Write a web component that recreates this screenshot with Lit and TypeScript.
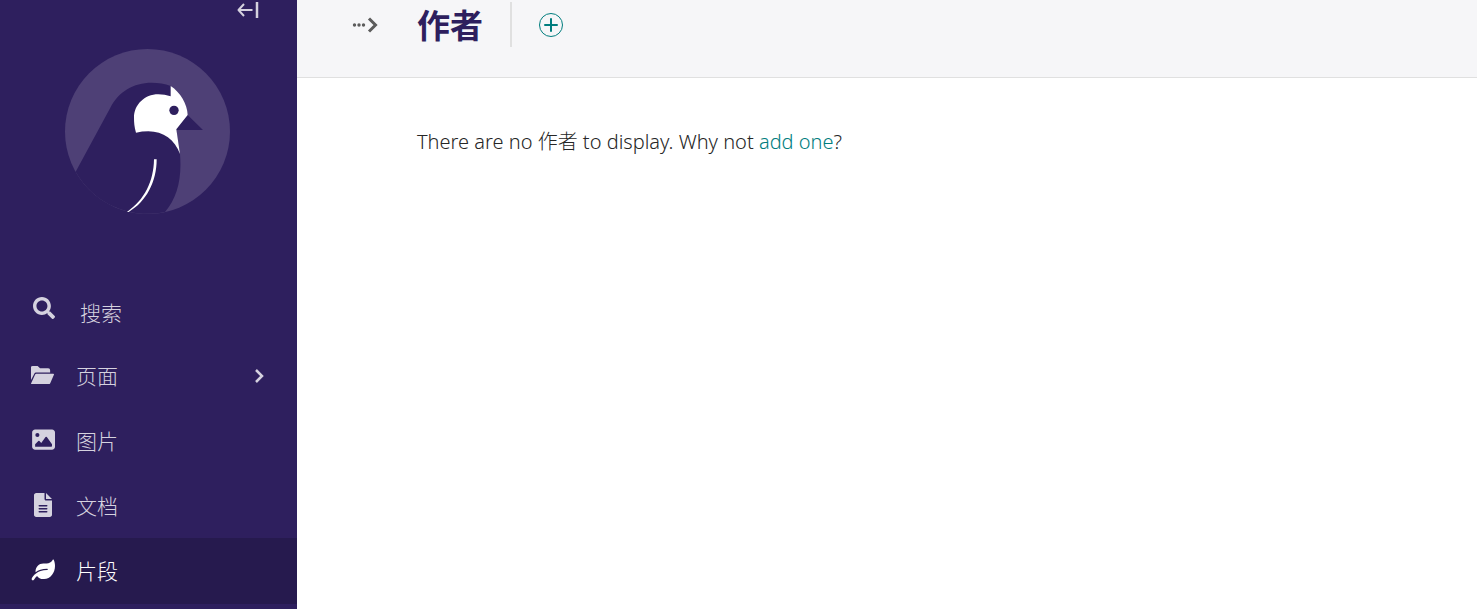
import { LitElement, html, css, svg } from "lit";
import { customElement } from "lit/decorators.js";
import { classMap } from "lit/directives/class-map.js";

const icons = {
  search: { box: "0 0 512 512", d: "M505 442.7L405.3 343c-4.5-4.5-10.6-7-17-7H372c27.6-35.3 44-79.7 44-128C416 93.1 322.9 0 208 0S0 93.1 0 208s93.1 208 208 208c48.3 0 92.7-16.4 128-44v16.3c0 6.4 2.5 12.5 7 17l99.7 99.7c9.4 9.4 24.6 9.4 33.9 0l28.3-28.3c9.4-9.4 9.4-24.6.1-34zM208 336c-70.7 0-128-57.2-128-128 0-70.7 57.2-128 128-128 70.7 0 128 57.2 128 128 0 70.7-57.2 128-128 128z" },
  folder: { box: "8 0 592 512", d: "M50 32H172L232 92H432Q480 92 480 140V192H126Q108 192 100 208L0 396V82Q0 32 50 32ZM138 224H560Q584 224 573 248L482 458Q472 480 448 480H22Q2 480 12 460L110 242Q118 224 138 224Z" },
  image: { box: "-24 0 512 512", d: "M0 96C0 60.7 28.7 32 64 32H424c35.3 0 64 28.7 64 64V400c0 35.3-28.700 64-64 64H64c-35.300 0-64-28.700-64-64V96zM64 384V348L132 276Q144 266 156 276L194 318L286 192Q300 176 314 192L424 344V384Q424 400 408 400H64ZM112 192a44 44 0 1 0 0-88 44 44 0 1 0 0 88z" },
  doc: { box: "-64 0 512 512", d: "M48 0C21.500 0 0 21.500 0 48V464c0 26.500 21.500 48 48 48H336c26.500 0 48-21.500 48-48V160H256c-17.700 0-32-14.300-32-32V0zM256 0V128H384zM112 256H272c21 0 21 32 0 32H112c-21 0-21-32 0-32zm0 64H272c21 0 21 32 0 32H112c-21 0-21-32 0-32zm0 64H272c21 0 21 32 0 32H112c-21 0-21-32 0-32z" },
  leaf: { box: "-16 0 592 512", d: "M546.2 9.7c-5.6-12.5-21.6-13-28.3-1.2C486.9 62.4 431.4 96 368 96h-80C182 96 96 182 96 288c0 7 .8 13.700 1.500 20.500C161.300 262.800 253.400 224 384 224c8.800 0 16 7.200 16 16s-7.200 16-16 16C132.600 256 26 410.100 2.400 468c-6.600 16.300 1.200 34.900 17.500 41.600 16.400 6.800 35-1.100 41.800-17.300 1.500-3.600 20.900-47.900 71.900-90.600 32.400 43.900 94 85.800 174.900 77.200C465.500 467.500 576 326.700 576 154.300c0-50.200-10.800-102.200-29.800-144.600z" },
};

type IconName = keyof typeof icons;

const icon = (name: IconName) => html`
  <svg class="icon" viewBox=${icons[name].box} aria-hidden="true">
    ${svg`<path fill="currentColor" fill-rule="evenodd" d=${icons[name].d}></path>`}
  </svg>`;

interface MenuEntry {
  label: string;
  icon: IconName;
  expandable?: boolean;
  active?: boolean;
}

const entries: MenuEntry[] = [
  { label: "页面", icon: "folder", expandable: true },
  { label: "图片", icon: "image" },
  { label: "文档", icon: "doc" },
  { label: "片段", icon: "leaf", active: true },
];

@customElement("side-bar")
export class SideBar extends LitElement {
  static styles = css`
    :host {
      display: flex;
      flex-direction: column;
      background: #2e1f5e;
      color: #d5d2df;
      font-weight: 300;
    }
    button, a {
      font: inherit;
      color: inherit;
      text-decoration: none;
      border: 0;
      background: none;
      cursor: pointer;
    }
    .top {
      display: flex;
      justify-content: flex-end;
      padding-right: 37px;
    }
    .collapse {
      display: flex;
      padding: 1px;
      height: 20px;
    }
    .logo {
      display: flex;
      justify-content: center;
      padding: 29px 2px 69px 0;
    }
    .logo svg {
      display: block;
    }
    .search, .item {
      display: flex;
      align-items: center;
      box-sizing: border-box;
      width: 100%;
      height: 65px;
      padding: 0 32px 0 31px;
      gap: 21px;
      font-size: 21px;
      line-height: 32px;
      text-align: left;
    }
    .search {
      height: 60px;
      padding-left: 32px;
      gap: 24px;
    }
    .search .icon {
      margin-bottom: 10px;
    }
    .menu {
      list-style: none;
      margin: 0;
      padding: 0;
    }
    .label {
      flex: 1;
    }
    .icon {
      width: 24px;
      height: 22px;
      flex: none;
    }
    .item .icon {
      height: 24px;
      margin-bottom: 2px;
    }
    .item.active {
      height: 66px;
      background: #261a4e;
      color: #fff;
    }
  `;

  render() {
    return html`
      <div class="top">
        <button class="collapse" aria-label="Collapse sidebar">
          <svg width="22" height="18" viewBox="0 0 22 18" fill="none" stroke="currentColor" stroke-width="2">
            <path d="M15.500 9H2M7 3L1.500 9L7 15" stroke-linejoin="round"></path>
            <path d="M20 1V17" stroke-width="2.500"></path>
          </svg>
        </button>
      </div>
      <a class="logo" href="#" aria-label="Dashboard">
        <svg width="165" height="165" viewBox="45 42 495 495">
          <circle cx="292.500" cy="289.500" r="247.500" fill="#4e4076"></circle>
          <path fill="#2e1f5e" d="M77 410L181 218C206 170 250 143 305 143C325 143 345 146 362 153L413 240L459 285H379L390 357C396 430 382 489 345 531A247.500 247.500 0 0 1 77 410Z"></path>
          <path fill="#fff" d="M362 153C391 172 412 207 413 240L379 283L390 357C375 315 340 289 295 289Q276 289 258 293C253 275 252 262 252 248C252 210 283 178 325 178Q344 178 362 184Z"></path>
          <path fill="#fff" d="M312 373H320C320 440 289 500 236 531H231C283 495 311 440 312 373Z"></path>
          <circle cx="372" cy="226" r="14" fill="#2e1f5e"></circle>
        </svg>
      </a>
      <button class="search">${icon("search")}<span class="label">搜索</span></button>
      <nav>
        <ul class="menu">
          ${entries.map((e) => html`
            <li>
              <a href="#" class=${classMap({ item: true, active: !!e.active })}>
                ${icon(e.icon)}<span class="label">${e.label}</span>
                ${e.expandable
                  ? html`<svg width="12" height="16" viewBox="0 0 12 16" fill="none" stroke="currentColor" stroke-width="2.500">
                      <path d="M3 2L9 8L3 14"></path>
                    </svg>`
                  : ""}
              </a>
            </li>`)}
        </ul>
      </nav>
    `;
  }
}

@customElement("app-root")
export class AppRoot extends LitElement {
  static styles = css`
    :host {
      display: grid;
      grid-template-columns: 297px 1fr;
      height: 100vh;
      overflow: hidden;
      background: #fff;
      color: #262626;
      font-family: "Noto Sans", "Noto Sans CJK SC", sans-serif;
    }
    header {
      display: flex;
      box-sizing: border-box;
      height: 78px;
      padding: 2px 55px 0;
      border-bottom: 1px solid #e0e0e0;
      background: #f6f6f8;
    }
    .crumbs {
      display: flex;
      align-items: center;
      width: 65px;
      height: 46px;
      padding: 0;
      border: 0;
      background: none;
      color: #5c5c5c;
    }
    h1 {
      margin: 0;
      padding-right: 27px;
      height: 45px;
      border-right: 2px solid #e0e0e0;
      font-family: "Noto Sans CJK SC", sans-serif;
      font-size: 33px;
      line-height: 45px;
      font-weight: 700;
      color: #2e1f5e;
    }
    .add {
      display: flex;
      align-items: center;
      height: 46px;
      margin-left: 26px;
      color: #007d7e;
    }
    .message {
      margin: 0;
      padding: 49px 120px;
      font-size: 20px;
      font-weight: 300;
      line-height: 30px;
    }
    .message a {
      color: #007d7e;
      text-decoration: none;
    }
  `;

  render() {
    return html`
      <side-bar></side-bar>
      <main>
        <header>
          <button class="crumbs" aria-label="Toggle breadcrumbs">
            <svg width="26" height="18" viewBox="0 0 26 18" fill="currentColor">
              <circle cx="2.500" cy="9" r="1.700"></circle>
              <circle cx="7" cy="9" r="1.700"></circle>
              <circle cx="11.500" cy="9" r="1.700"></circle>
              <path d="M17 2.500L23.500 9L17 15.500" fill="none" stroke="currentColor" stroke-width="3"></path>
            </svg>
          </button>
          <h1>作者</h1>
          <a class="add" href="#" aria-label="Add">
            <svg width="26" height="26" viewBox="0 0 26 26" fill="none" stroke="currentColor">
              <circle cx="13" cy="13" r="11.500"></circle>
              <path d="M13 7V19M7 13H19" stroke-width="2" stroke-linecap="round"></path>
            </svg>
          </a>
        </header>
        <p class="message">There are no 作者 to display. Why not <a href="#">add one</a>?</p>
      </main>
    `;
  }
}
